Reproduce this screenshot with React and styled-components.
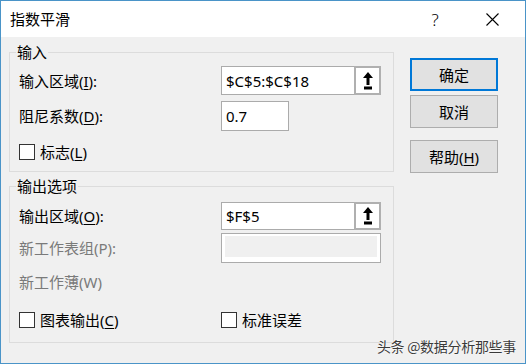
import React from "react";
import styled, { createGlobalStyle } from "styled-components";

const Global = createGlobalStyle`
  html, body { margin: 0; padding: 0; background: #ffffff; }
  * { box-sizing: border-box; }
`;

const FONT = `"Noto Sans", "Noto Sans CJK SC", sans-serif`;

const Window = styled.div`
  position: relative;
  width: 526px;
  height: 364px;
  border: 1px solid #4a94c8;
  background: #f0f0f0;
  display: flex;
  flex-direction: column;
  font-family: ${FONT};
  color: #000;
  overflow: hidden;
`;

const TitleBar = styled.div`
  height: 36px;
  flex: 0 0 36px;
  background: #ffffff;
  display: flex;
  align-items: center;
  padding-left: 9px;
`;

const Title = styled.div`
  font-size: 15px;
  line-height: 18px;
  flex: 1;
`;

const TitleBtn = styled.div`
  width: 46px;
  height: 36px;
  display: flex;
  align-items: center;
  justify-content: center;
  font-size: 17px;
  font-weight: 300;
  margin-right: ${(p) => p.$mr || 0}px;
`;

const Body = styled.div`
  display: flex;
  gap: 16px;
  padding: 6px 0 0 8px;
`;

const LeftCol = styled.div`
  display: flex;
  flex-direction: column;
  gap: 5px;
`;

const Group = styled.fieldset`
  margin: 0;
  width: 385px;
  min-width: 0;
  border: 1px solid #dcdcdc;
  padding: ${(p) => p.$pt}px 11px 7px 9px;
`;

const Legend = styled.legend`
  font-size: 15px;
  line-height: 18px;
  padding: 0 1px;
  margin-left: -3px;
`;

const Row = styled.div`
  display: flex;
  align-items: center;
  height: ${(p) => p.$h}px;
  margin-top: ${(p) => p.$mt || 0}px;
`;

const Label = styled.div`
  flex: 0 0 202px;
  font-size: 15px;
  line-height: 18px;
  color: ${(p) => (p.$disabled ? "#7a7a7a" : "#000")};
  white-space: nowrap;
`;

const U = styled.span`
  text-decoration: underline;
  text-underline-offset: 2px;
`;

const InputBox = styled.div`
  width: ${(p) => p.$w}px;
  height: ${(p) => p.$h}px;
  border: 1px solid #ababab;
  background: #ffffff;
  display: flex;
  align-items: center;
  font-size: 15px;
  padding-left: 4px;
`;

const InputText = styled.span`
  flex: 1;
  line-height: 18px;
`;

const RefBtn = styled.div`
  width: 27px;
  align-self: stretch;
  margin: -1px -1px -1px 0;
  border: 2px solid #b0b0b0;
  background: #ffffff;
  display: flex;
  align-items: center;
  justify-content: center;
  padding-left: 1px;
`;

const DisabledBox = styled.div`
  width: 160px;
  height: 30px;
  border: 1px solid #ababab;
  background: #ffffff;
  padding: 2px 3px 5px 3px;
`;

const DisabledFill = styled.div`
  width: 100%;
  height: 100%;
  background: #f0f0f0;
`;

const Check = styled.label`
  display: flex;
  align-items: center;
  gap: 5px;
  font-size: 15px;
  line-height: 18px;
  flex: ${(p) => (p.$fixed ? "0 0 202px" : "0 0 auto")};
`;

const Box = styled.span`
  width: 16px;
  height: 16px;
  border: 1px solid #333333;
  background: #ffffff;
  display: inline-block;
`;

const RightCol = styled.div`
  display: flex;
  flex-direction: column;
  padding-top: 15px;
`;

const Button = styled.div`
  width: 88px;
  height: 33px;
  margin-top: ${(p) => p.$mt || 0}px;
  background: #e1e1e1;
  border: ${(p) => (p.$primary ? "2px solid #0078d7" : "1px solid #adadad")};
  display: flex;
  align-items: center;
  justify-content: center;
  font-size: 15px;
  line-height: 18px;
`;

const Watermark = styled.div`
  position: absolute;
  right: 9px;
  bottom: 9px;
  font-size: 14px;
  letter-spacing: -0.3px;
  line-height: 16px;
  color: #3a3a3a;
  font-family: "Noto Sans CJK SC", sans-serif;
  text-shadow: 0 0 2px #ffffff, 0 0 1px #ffffff;
  white-space: nowrap;
`;

const UpArrow = () => (
  <svg width="10" height="18" viewBox="0 0 10 18">
    <polygon points="5,0 10,6 6.5,6 6.5,13 3.5,13 3.5,6 0,6" fill="#000" />
    <rect x="1" y="14.5" width="8" height="3" fill="#000" />
  </svg>
);

const CloseIcon = () => (
  <svg width="13" height="13" viewBox="0 0 13 13">
    <path d="M0.5 0.5 L12.5 12.5 M12.5 0.5 L0.5 12.5" stroke="#000" strokeWidth="1.1" fill="none" />
  </svg>
);

export default function App() {
  return (
    <>
      <Global />
      <Window>
        <TitleBar>
          <Title>指数平滑</Title>
          <TitleBtn $mr={11}>?</TitleBtn>
          <TitleBtn $mr={10}>
            <CloseIcon />
          </TitleBtn>
        </TitleBar>
        <Body>
          <LeftCol>
            <Group $pt={5}>
              <Legend>输入</Legend>
              <Row $h={29}>
                <Label>
                  输入区域(<U>I</U>):
                </Label>
                <InputBox $w={160} $h={29}>
                  <InputText>$C$5:$C$18</InputText>
                  <RefBtn>
                    <UpArrow />
                  </RefBtn>
                </InputBox>
              </Row>
              <Row $h={30} $mt={6}>
                <Label>
                  阻尼系数(<U>D</U>):
                </Label>
                <InputBox $w={68} $h={30}>
                  <InputText>0.7</InputText>
                </InputBox>
              </Row>
              <Row $h={24} $mt={9}>
                <Check>
                  <Box />
                  <span>
                    标志(<U>L</U>)
                  </span>
                </Check>
              </Row>
            </Group>
            <Group $pt={7}>
              <Legend>输出选项</Legend>
              <Row $h={28}>
                <Label>
                  输出区域(<U>O</U>):
                </Label>
                <InputBox $w={160} $h={28}>
                  <InputText>$F$5</InputText>
                  <RefBtn>
                    <UpArrow />
                  </RefBtn>
                </InputBox>
              </Row>
              <Row $h={30} $mt={3}>
                <Label $disabled>新工作表组(P):</Label>
                <DisabledBox>
                  <DisabledFill />
                </DisabledBox>
              </Row>
              <Row $h={30} $mt={4}>
                <Label $disabled>新工作薄(W)</Label>
              </Row>
              <Row $h={30} $mt={8}>
                <Check $fixed>
                  <Box />
                  <span>
                    图表输出(<U>C</U>)
                  </span>
                </Check>
                <Check>
                  <Box />
                  <span>标准误差</span>
                </Check>
              </Row>
            </Group>
          </LeftCol>
          <RightCol>
            <Button $primary>确定</Button>
            <Button $mt={4}>取消</Button>
            <Button $mt={12}>
              帮助(<U>H</U>)
            </Button>
          </RightCol>
        </Body>
        <Watermark>头条 @数据分析那些事</Watermark>
      </Window>
    </>
  );
}
